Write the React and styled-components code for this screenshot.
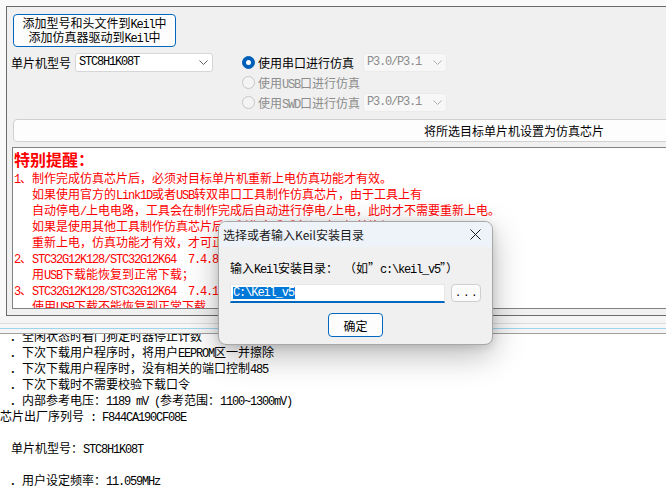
import React from 'react';
import styled, { createGlobalStyle } from 'styled-components';

const GlobalStyle = createGlobalStyle`
  html, body {
    margin: 0;
    padding: 0;
    background: #fff;
    overflow: hidden;
  }
  body {
    font-family: "Noto Sans CJK SC", "Noto Sans", sans-serif;
    font-size: 12px;
    color: #000;
  }
`;

// 半角字符（SimSun 风格，每字 6px）
const Lat = styled.span`
  font-family: "Liberation Mono", monospace;
  font-size: 12px;
  letter-spacing: -1.2px;
  white-space: pre;
`;

const Mix = ({ text }) =>
  text.split(/([\x20-\x7e]+)/).map((s, i) => (i % 2 ? <Lat key={i}>{s}</Lat> : s));

const Chevron = ({ color }) => (
  <svg width="9" height="5" viewBox="0 0 9 5">
    <path d="M0.5 0.5 L4.5 4.5 L8.5 0.5" fill="none" stroke={color} strokeWidth="1" />
  </svg>
);

const Screen = styled.div`
  position: relative;
  width: 666px;
  height: 490px;
  overflow: hidden;
  display: flex;
  flex-direction: column;
  background: #fff;
`;

const Frame = styled.div`
  padding: 6px 0 0 6px;
  background: #f9f9f9;
`;

const Panel = styled.div`
  box-sizing: border-box;
  height: 310px;
  padding-top: 7px;
  background: #f0f0f0;
  border-top: 1px solid #6b6b6b;
  border-left: 1px solid #6b6b6b;
  border-bottom: 1px solid #6b6b6b;
  overflow: hidden;
`;

const TopButton = styled.button`
  box-sizing: border-box;
  display: flex;
  flex-direction: column;
  align-items: center;
  justify-content: center;
  margin-left: 6px;
  width: 163px;
  height: 33px;
  padding: 0;
  background: #fdfdfd;
  border: 1px solid #0067c0;
  border-radius: 4px;
  font: inherit;
  line-height: 11px;
  color: #000;
`;

const ControlRow = styled.div`
  display: flex;
  align-items: flex-start;
  margin-top: 6px;
`;

const ModelGroup = styled.div`
  display: flex;
  align-items: center;
  gap: 4px;
  margin-left: 4px;
  height: 19px;
`;

const Select = styled.div`
  box-sizing: border-box;
  display: flex;
  align-items: center;
  justify-content: space-between;
  width: ${(p) => p.$w}px;
  height: 19px;
  padding: 0 4px 0 3px;
  background: ${(p) => (p.$disabled ? '#f7f7f7' : '#fff')};
  border: 1px solid ${(p) => (p.$disabled ? '#ebebeb' : '#d6d6d6')};
  border-radius: 3px;
  color: ${(p) => (p.$disabled ? '#8a8a8a' : '#000')};
  line-height: 17px;
`;

const RadioGrid = styled.div`
  display: grid;
  grid-template-columns: 121px auto;
  grid-auto-rows: 20px;
  margin-left: 29px;
`;

const RadioLabel = styled.label`
  display: flex;
  align-items: center;
  gap: 3px;
  height: 19px;
  white-space: nowrap;
  color: ${(p) => (p.$disabled ? '#8d8d8d' : '#000')};
`;

const Radio = styled.span`
  position: relative;
  box-sizing: border-box;
  width: 13px;
  height: 13px;
  border-radius: 50%;
  flex: none;
  background: ${(p) => (p.$checked ? '#005fb8' : '#f4f4f4')};
  border: 1px solid ${(p) => (p.$checked ? '#005fb8' : '#c6c6c6')};
  &::after {
    content: '';
    display: ${(p) => (p.$checked ? 'block' : 'none')};
    position: absolute;
    left: 3px;
    top: 3px;
    width: 5px;
    height: 5px;
    border-radius: 50%;
    background: #fff;
  }
`;

const WideButton = styled.button`
  box-sizing: border-box;
  display: block;
  margin: 6px 0 0 6px;
  width: 1002px;
  height: 23px;
  padding: 0;
  background: #fdfdfd;
  border: 1px solid #d0d0d0;
  border-radius: 4px;
  font: inherit;
  color: #000;
`;

const Memo = styled.div`
  box-sizing: border-box;
  margin: 5px 0 0 5px;
  width: 1000px;
  height: 162px;
  padding: 0 0 0 1px;
  background: #fff;
  border: 1px solid #7f8388;
  overflow: hidden;
  color: #ff0000;
`;

const Heading = styled.div`
  font-size: 16px;
  font-weight: bold;
  line-height: 22px;
`;

const NoteLine = styled.div`
  height: 16px;
  line-height: 16px;
  white-space: pre;
  padding-left: ${(p) => (p.$cont ? 18 : 0)}px;
`;

const Splitter = styled.div`
  padding: 7px 0 4px;
  background: #f5f5f5;
  border-bottom: 1px solid #a0a0a0;
`;

const Groove = styled.div`
  height: 4px;
  background: #f7f7f7;
  border-top: 1px solid #dcdcdc;
  border-bottom: 1px solid #9fd4ef;
`;

const Log = styled.div`
  flex: 1;
  overflow: hidden;
  background: #fff;
`;

const LogInner = styled.div`
  margin-top: -6px;
`;

const LogLine = styled.div`
  height: 16px;
  line-height: 16px;
  white-space: pre;
  padding-left: ${(p) => p.$indent || 0}px;
`;

const Dialog = styled.div`
  position: absolute;
  left: 218px;
  top: 221px;
  box-sizing: border-box;
  width: 275px;
  height: 124px;
  background: #f0f0f0;
  border: 1px solid #a8a8a8;
  border-radius: 8px;
  overflow: hidden;
  box-shadow: 0 10px 32px rgba(0, 0, 0, 0.28), 0 2px 8px rgba(0, 0, 0, 0.12);
`;

const TitleBar = styled.div`
  display: flex;
  align-items: center;
  justify-content: space-between;
  height: 25px;
  padding: 0 11px 0 4px;
  background: #eef2f9;
  color: #1a1a1a;
`;

const DialogBody = styled.div`
  display: flex;
  flex-direction: column;
  padding: 12px 0 0 11px;
`;

const InputRow = styled.div`
  display: flex;
  gap: 6px;
  margin-top: 7px;
`;

const TextInput = styled.div`
  box-sizing: border-box;
  display: flex;
  align-items: center;
  width: 215px;
  height: 19px;
  padding-left: 2px;
  background: #fff;
  border: 1px solid #e6e6e6;
  border-bottom: 2px solid #0067c0;
`;

const Selected = styled.span`
  background: #0078d7;
  color: #fff;
  line-height: 12px;
  font-family: "Liberation Mono", monospace;
  font-size: 12px;
  letter-spacing: -1.1px;
  padding-right: 1px;
`;

const SmallButton = styled.div`
  box-sizing: border-box;
  display: flex;
  align-items: center;
  justify-content: center;
  width: 30px;
  height: 18px;
  background: #fbfbfb;
  border: 1px solid #cfcfcf;
  border-radius: 4px;
  font-family: "Liberation Mono", monospace;
  font-size: 11px;
  letter-spacing: 1.6px;
  padding-left: 2px;
`;

const OkButton = styled.button`
  box-sizing: border-box;
  align-self: center;
  margin: 10px 0 0 -11px;
  width: 55px;
  height: 24px;
  padding: 0;
  background: #fdfdfd;
  border: 1px solid #0067c0;
  border-radius: 4px;
  font: inherit;
  color: #000;
`;

const notes = [
  { t: '1、制作完成仿真芯片后，必须对目标单片机重新上电仿真功能才有效。' },
  { t: '如果使用官方的Link1D或者USB转双串口工具制作仿真芯片，由于工具上有', c: true },
  { t: '自动停电/上电电路，工具会在制作完成后自动进行停电/上电，此时才不需要重新上电。', c: true },
  { t: '如果是使用其他工具制作仿真芯片后，制作完成后必须对目标单片机', c: true },
  { t: '重新上电，仿真功能才有效，才可正常仿真。', c: true },
  { t: '2、STC32G12K128/STC32G12K64  7.4.8版本前的芯片，制作仿真后只能使' },
  { t: '用USB下载能恢复到正常下载；', c: true },
  { t: '3、STC32G12K128/STC32G12K64  7.4.12版本后的芯片，制作仿真后' },
  { t: '使用USB下载不能恢复到正常下载，需使用串口下载。', c: true },
];

const logLines = [
  { t: '．全闲状态时看门狗定时器停止计数', i: 10 },
  { t: '．下次下载用户程序时，将用户EEPROM区一并擦除', i: 10 },
  { t: '．下次下载用户程序时，没有相关的端口控制485', i: 10 },
  { t: '．下次下载时不需要校验下载口令', i: 10 },
  { t: '．内部参考电压：1189 mV (参考范围：1100~1300mV)', i: 10 },
  { t: '芯片出厂序列号 : F844CA190CF08E', i: 0 },
  { t: '', i: 0 },
  { t: '单片机型号：STC8H1K08T', i: 11 },
  { t: '', i: 0 },
  { t: '．用户设定频率：11.059MHz', i: 10 },
  { t: '．调节后的频率：11.058MHz', i: 10 },
];

export default function App() {
  return (
    <>
      <GlobalStyle />
      <Screen>
        <Frame>
          <Panel>
            <TopButton type="button">
              <span><Mix text="添加型号和头文件到Keil中" /></span>
              <span><Mix text="添加仿真器驱动到Keil中" /></span>
            </TopButton>

            <ControlRow>
              <ModelGroup>
                <span>单片机型号</span>
                <Select $w={138}>
                  <Lat>STC8H1K08T</Lat>
                  <Chevron color="#606060" />
                </Select>
              </ModelGroup>

              <RadioGrid>
                <RadioLabel>
                  <Radio $checked />
                  使用串口进行仿真
                </RadioLabel>
                <Select $w={84} $disabled>
                  <Lat>P3.0/P3.1</Lat>
                  <Chevron color="#b0b0b0" />
                </Select>
                <RadioLabel $disabled>
                  <Radio />
                  <span><Mix text="使用USB口进行仿真" /></span>
                </RadioLabel>
                <span />
                <RadioLabel $disabled>
                  <Radio />
                  <span><Mix text="使用SWD口进行仿真" /></span>
                </RadioLabel>
                <Select $w={84} $disabled>
                  <Lat>P3.0/P3.1</Lat>
                  <Chevron color="#b0b0b0" />
                </Select>
              </RadioGrid>
            </ControlRow>

            <WideButton type="button">将所选目标单片机设置为仿真芯片</WideButton>

            <Memo>
              <Heading>特别提醒：</Heading>
              {notes.map((n, i) => (
                <NoteLine key={i} $cont={n.c}>
                  <Mix text={n.t} />
                </NoteLine>
              ))}
            </Memo>
          </Panel>
        </Frame>

        <Splitter>
          <Groove />
        </Splitter>

        <Log>
          <LogInner>
            {logLines.map((l, i) => (
              <LogLine key={i} $indent={l.i}>
                <Mix text={l.t} />
              </LogLine>
            ))}
          </LogInner>
        </Log>

        <Dialog>
          <TitleBar>
            <span>选择或者输入Keil安装目录</span>
            <svg width="11" height="11" viewBox="0 0 11 11">
              <path d="M0.5 0.5 L10.5 10.5 M10.5 0.5 L0.5 10.5" stroke="#1a1a1a" strokeWidth="1" />
            </svg>
          </TitleBar>
          <DialogBody>
            <span>
              <Mix text="输入Keil安装目录： （如”c:\keil_v5”）" />
            </span>
            <InputRow>
              <TextInput>
                <Selected>C:\Keil_v5</Selected>
              </TextInput>
              <SmallButton>...</SmallButton>
            </InputRow>
            <OkButton type="button">确定</OkButton>
          </DialogBody>
        </Dialog>
      </Screen>
    </>
  );
}
